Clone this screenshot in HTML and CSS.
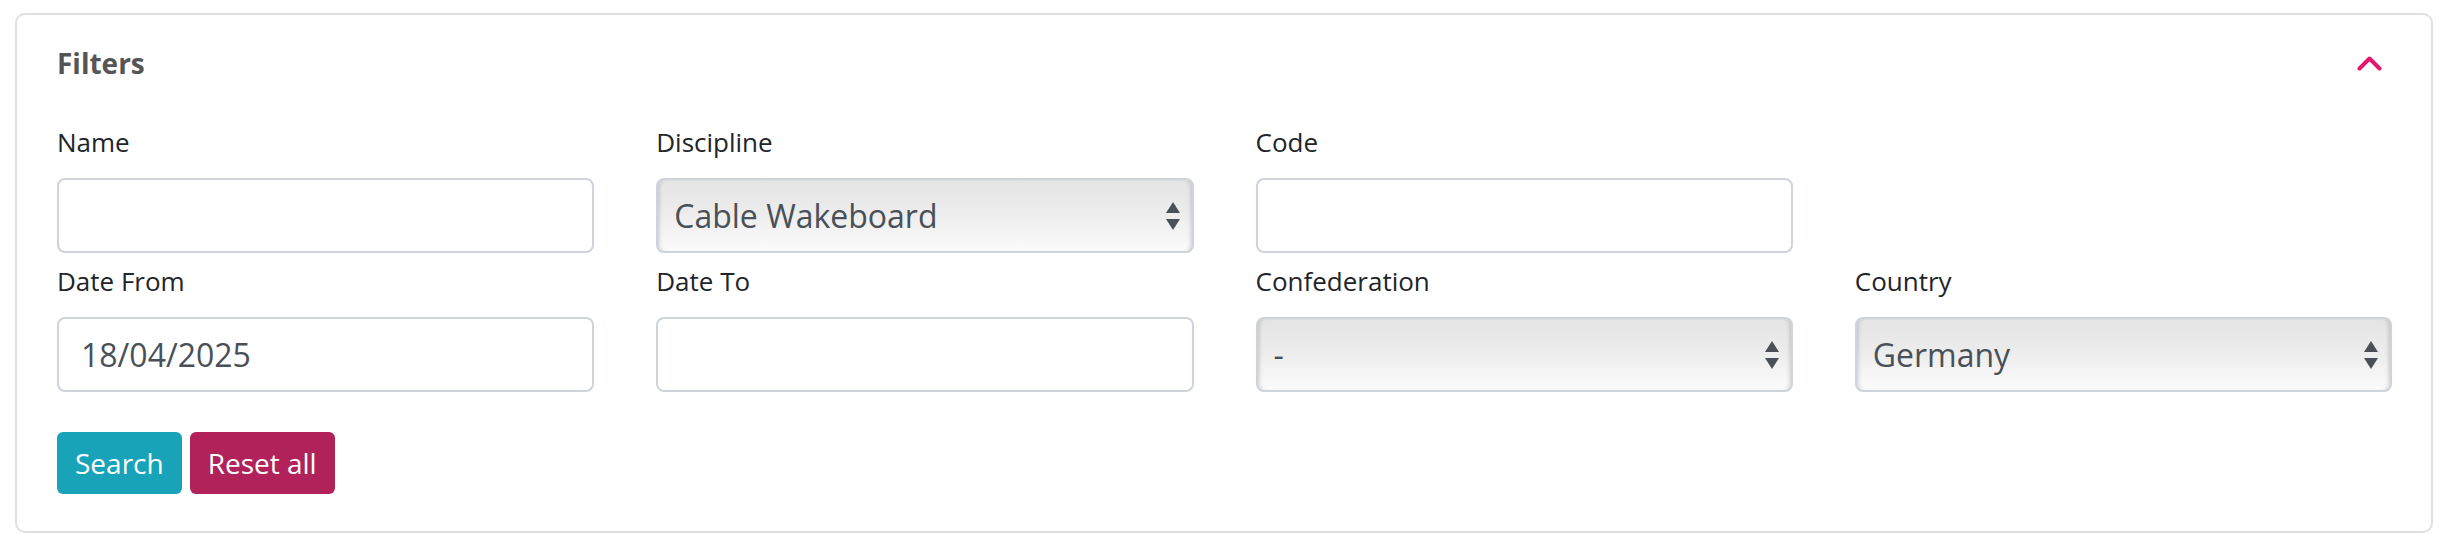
FILE: index.html
```html
<!DOCTYPE html>
<html lang="en">
<head>
    <meta charset="UTF-8">
    <title>Filters</title>
    <link rel="stylesheet" href="styles.css">
</head>
<body>

<div class="card">
    <div class="card-header">
        <h2 class="card-title">Filters</h2>
        <button class="toggle" title="Collapse">
            <svg width="25" height="15" viewBox="0 0 25 15">
                <polyline points="2.5,12.5 12.5,2.5 22.5,12.5" fill="none" stroke="#e5176d" stroke-width="4" stroke-linecap="round" stroke-linejoin="round"/>
            </svg>
        </button>
    </div>

    <form class="filters">
        <div class="field">
            <label>Name</label>
            <input type="text">
        </div>
        <div class="field">
            <label>Discipline</label>
            <div class="select-wrap">
                <select>
                    <option>Cable Wakeboard</option>
                </select>
            </div>
        </div>
        <div class="field">
            <label>Code</label>
            <input type="text">
        </div>

        <div class="field new-row">
            <label>Date From</label>
            <input type="text" value="18/04/2025">
        </div>
        <div class="field">
            <label>Date To</label>
            <input type="text">
        </div>
        <div class="field">
            <label>Confederation</label>
            <div class="select-wrap">
                <select>
                    <option>-</option>
                </select>
            </div>
        </div>
        <div class="field">
            <label>Country</label>
            <div class="select-wrap">
                <select>
                    <option>Germany</option>
                </select>
            </div>
        </div>
    </form>

    <div class="actions">
        <button class="btn btn-search">Search</button>
        <button class="btn btn-reset">Reset all</button>
    </div>
</div>

</body>
</html>
```

FILE: styles.css
```css
body {
    font-family: "Open Sans", Arial, sans-serif;
    margin: 0;
    padding: 13px 11px 0 15px;
    background-color: #fff;
    color: #212529;
}

.card {
    border: 2px solid #e0e0e0;
    border-radius: 10px;
    padding: 27px 39px 37px 40px;
    height: 520px;
    box-sizing: border-box;
}

.card-header {
    display: flex;
    justify-content: space-between;
    align-items: center;
    margin-bottom: 40px;
}

.card-title {
    margin: 0;
    font-size: 28px;
    line-height: 42px;
    font-weight: 700;
    color: #555;
}

.toggle {
    background: none;
    border: none;
    padding: 0;
    margin-right: 10px;
    cursor: pointer;
    display: flex;
}

.filters {
    display: grid;
    grid-template-columns: repeat(4, 1fr);
    column-gap: 62px;
}

.field {
    margin-bottom: 10px;
}

.field.new-row {
    grid-column-start: 1;
}

.field label {
    display: block;
    font-size: 26px;
    line-height: 36px;
    margin-bottom: 18px;
}

.field input,
.field select {
    display: block;
    width: 100%;
    height: 75px;
    box-sizing: border-box;
    border: 2px solid #ced4da;
    border-radius: 8px;
    font-family: "Open Sans", Arial, sans-serif;
    font-size: 32px;
    color: #495057;
    background: #fff;
    outline: none;
}

.field input {
    padding: 0 22px;
}

.select-wrap {
    position: relative;
}

.field select {
    -webkit-appearance: none;
    appearance: none;
    padding: 0 40px 0 16px;
    background: linear-gradient(#e4e4e4, #ececec 45%, #fbfbfb);
    box-shadow: inset 4px 0 4px -3px rgba(0, 0, 0, 0.18), inset -4px 0 4px -3px rgba(0, 0, 0, 0.18);
}

.select-wrap::before,
.select-wrap::after {
    content: "";
    position: absolute;
    right: 14px;
    border-left: 7.5px solid transparent;
    border-right: 7.5px solid transparent;
    pointer-events: none;
}

.select-wrap::before {
    top: 24px;
    border-bottom: 11px solid #4a5057;
}

.select-wrap::after {
    top: 41px;
    border-top: 11px solid #4a5057;
}

.actions {
    display: flex;
    gap: 8px;
    margin-top: 30px;
}

.btn {
    font-family: "Open Sans", Arial, sans-serif;
    font-size: 28px;
    line-height: 42px;
    padding: 10px 18px;
    color: white;
    border: none;
    border-radius: 6px;
    cursor: pointer;
}

.btn-search {
    background: #19a3b9;
}

.btn-reset {
    background: #b1225a;
}
```
